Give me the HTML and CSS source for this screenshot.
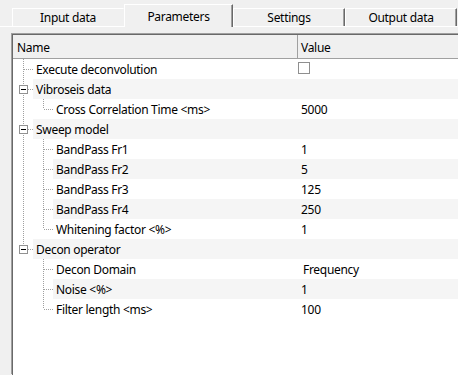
FILE: index.html
```html
<!DOCTYPE html>
<html>
<head>
<meta charset="utf-8">
<link rel="stylesheet" href="styles.css">
</head>
<body>
<div class="tabs">
  <div class="tab first">Input data</div>
  <div class="tab sel">Parameters</div>
  <div class="tab">Settings</div>
  <div class="tab">Output data</div>
</div>
<div class="frame">
  <div class="frame-in">
    <div class="head">
      <div class="hname">Name</div>
      <div class="hval">Value</div>
    </div>
    <div class="rows">
      <div class="row">
        <div class="name"><span class="g v h"></span><span class="label">Execute deconvolution</span></div>
        <div class="value chk"><span class="cb"></span></div>
      </div>
      <div class="row alt">
        <div class="name"><span class="g v h bx"><i class="box"></i></span><span class="label">Vibroseis data</span></div>
        <div class="value"></div>
      </div>
      <div class="row">
        <div class="name"><span class="g v"></span><span class="g half h"></span><span class="label">Cross Correlation Time &lt;ms&gt;</span></div>
        <div class="value">5000</div>
      </div>
      <div class="row alt">
        <div class="name"><span class="g v h bx"><i class="box"></i></span><span class="label">Sweep model</span></div>
        <div class="value"></div>
      </div>
      <div class="row">
        <div class="name"><span class="g v"></span><span class="g v h"></span><span class="label">BandPass Fr1</span></div>
        <div class="value">1</div>
      </div>
      <div class="row alt">
        <div class="name"><span class="g v"></span><span class="g v h"></span><span class="label">BandPass Fr2</span></div>
        <div class="value">5</div>
      </div>
      <div class="row">
        <div class="name"><span class="g v"></span><span class="g v h"></span><span class="label">BandPass Fr3</span></div>
        <div class="value">125</div>
      </div>
      <div class="row alt">
        <div class="name"><span class="g v"></span><span class="g v h"></span><span class="label">BandPass Fr4</span></div>
        <div class="value">250</div>
      </div>
      <div class="row">
        <div class="name"><span class="g v"></span><span class="g half h"></span><span class="label">Whitening factor &lt;%&gt;</span></div>
        <div class="value">1</div>
      </div>
      <div class="row alt">
        <div class="name"><span class="g half h bx"><i class="box"></i></span><span class="label">Decon operator</span></div>
        <div class="value"></div>
      </div>
      <div class="row">
        <div class="name"><span class="g"></span><span class="g v h"></span><span class="label">Decon Domain</span></div>
        <div class="value combo">Frequency</div>
      </div>
      <div class="row alt">
        <div class="name"><span class="g"></span><span class="g v h"></span><span class="label">Noise &lt;%&gt;</span></div>
        <div class="value">1</div>
      </div>
      <div class="row">
        <div class="name"><span class="g"></span><span class="g half h"></span><span class="label">Filter length &lt;ms&gt;</span></div>
        <div class="value">100</div>
      </div>
    </div>
  </div>
</div>
</body>
</html>
```
FILE: styles.css
```css
html, body {
  margin: 0;
  padding: 0;
}
body {
  width: 458px;
  height: 375px;
  overflow: hidden;
  background: #f0f0f0;
  font-family: "Noto Sans", "Open Sans", sans-serif;
  font-size: 12px;
  letter-spacing: -0.3px;
  color: #000;
}
.tabs {
  display: flex;
  align-items: flex-end;
  height: 26px;
  padding-left: 12px;
  border-bottom: 1px solid #fff;
}
.tab {
  box-sizing: border-box;
  flex: none;
  width: 112px;
  height: 18px;
  border-top: 1px solid #fff;
  border-left: 1px solid #fff;
  border-right: 1px solid #696969;
  box-shadow: inset -1px 0 0 #a0a0a0;
  text-align: center;
  line-height: 18px;
  white-space: nowrap;
  overflow: hidden;
}
.tab.first {
  border-right-color: transparent;
  box-shadow: none;
}
.tab.sel {
  width: 109px;
  height: 23px;
  margin-bottom: -1px;
  background: #f0f0f0;
  line-height: 24px;
  position: relative;
  z-index: 1;
}
.frame {
  margin-top: 6px;
  margin-left: 11px;
  height: 340px;
  border-top: 1px solid #a0a0a0;
  border-left: 1px solid #a0a0a0;
}
.frame-in {
  height: 100%;
  background: #fff;
  border-top: 1px solid #696969;
  border-left: 1px solid #696969;
}
.head {
  box-sizing: border-box;
  display: flex;
  height: 24px;
  padding-top: 2px;
  background: #f0f0f0;
  border-bottom: 1px solid #a0a0a0;
  line-height: 21px;
}
.hname {
  box-sizing: border-box;
  width: 285px;
  flex: none;
  padding-left: 4px;
  margin-top: -2px;
  padding-top: 2px;
  border-right: 1px solid #a0a0a0;
}
.hval {
  flex: 1;
  padding-left: 3px;
}
.row {
  display: flex;
  height: 20px;
}
.name {
  width: 284px;
  flex: none;
  display: flex;
}
.label,
.value {
  box-sizing: border-box;
  height: 20px;
  padding-top: 2px;
  line-height: 18px;
  white-space: nowrap;
}
.label {
  flex: 1;
  padding-left: 3px;
}
.value {
  flex: 1;
  padding-left: 4px;
}
.value.combo {
  padding-left: 6px;
}
.value.chk {
  padding-left: 1px;
  padding-top: 0;
  display: flex;
  align-items: flex-start;
}
.cb {
  box-sizing: border-box;
  width: 12px;
  height: 12px;
  margin-top: 3px;
  border: 1px solid #8f8f8f;
  background: #fff;
}
.row.alt .label,
.row.alt .value {
  background: #f5f5f5;
}
.g {
  width: 20px;
  flex: none;
  position: relative;
}
.g.v::before,
.g.half::before {
  content: "";
  position: absolute;
  left: 10px;
  top: 0;
  bottom: 0;
  width: 1px;
  background: repeating-linear-gradient(to bottom, #a0a0a0 0 1px, transparent 1px 2px);
}
.g.half::before {
  bottom: 10px;
}
.g.h::after {
  content: "";
  position: absolute;
  left: 11px;
  right: 0;
  top: 10px;
  height: 1px;
  background: repeating-linear-gradient(to right, #a0a0a0 0 1px, transparent 1px 2px);
}
.g.bx::after {
  left: 15px;
}
.box {
  position: absolute;
  left: 6px;
  top: 6px;
  width: 9px;
  height: 9px;
  box-sizing: border-box;
  border: 1px solid #919191;
  background: #fff;
  z-index: 1;
}
.box::after {
  content: "";
  position: absolute;
  left: 1px;
  top: 3px;
  width: 5px;
  height: 1px;
  background: #000;
}
```
